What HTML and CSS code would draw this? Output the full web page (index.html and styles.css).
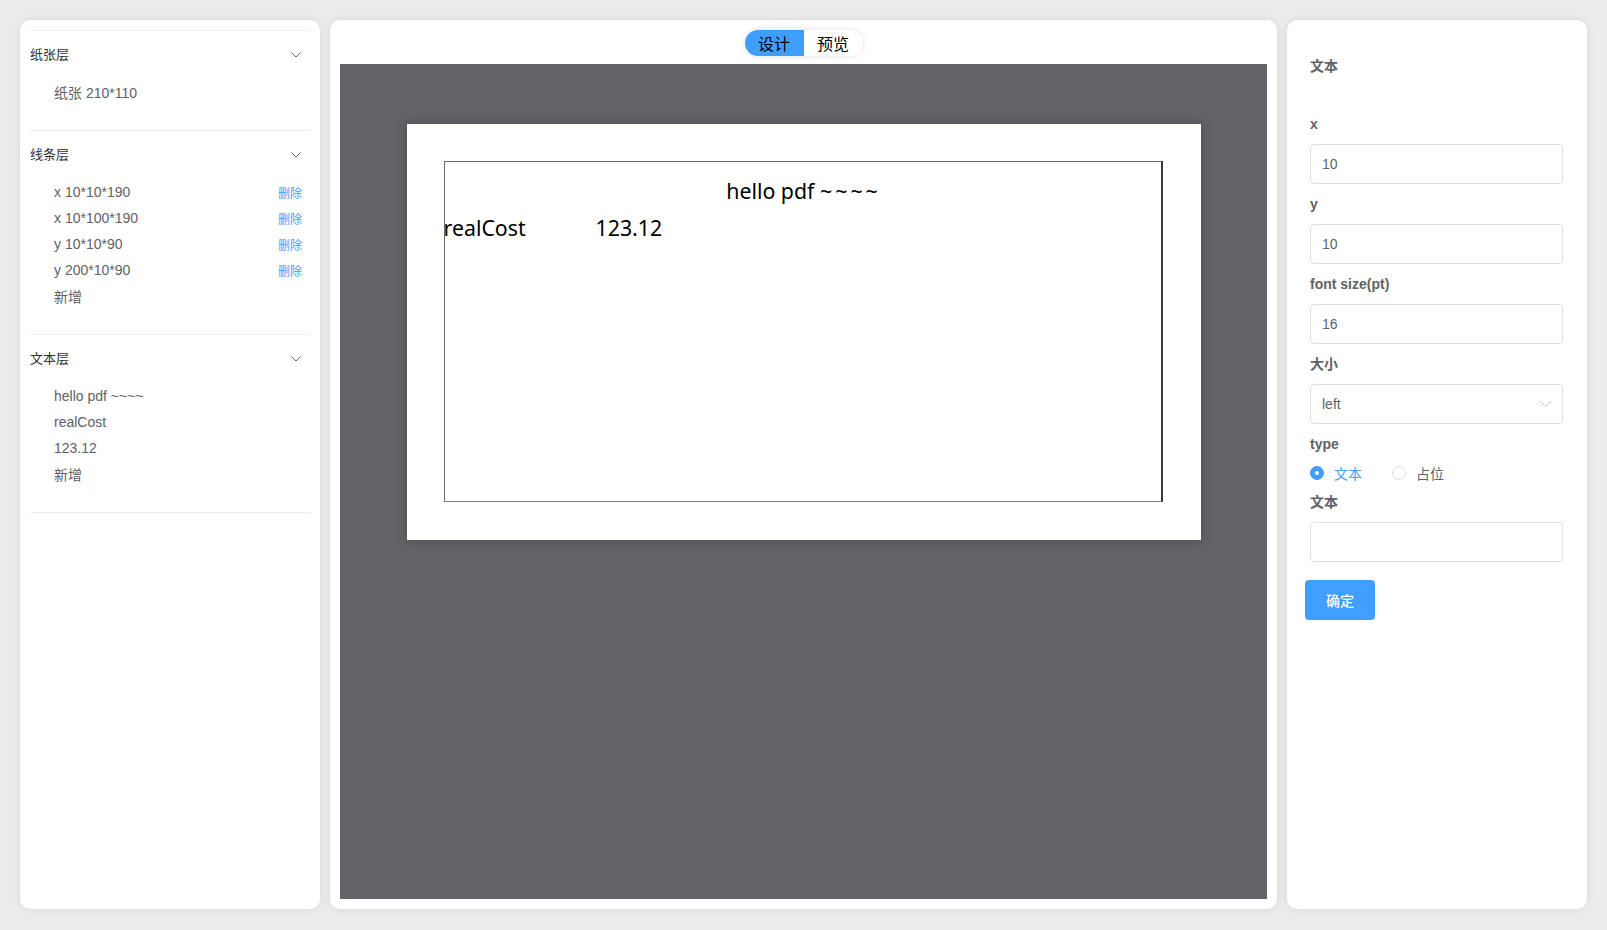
FILE: index.html
```html
<!DOCTYPE html>
<html lang="zh-CN">
<head>
<meta charset="utf-8">
<title>PDF 模板设计</title>
<link rel="stylesheet" href="styles.css">
</head>
<body>
<div class="layout">
  <aside class="panel panel-left">
    <div class="collapse">
      <section class="c-item">
        <div class="c-header"><span class="c-title">纸张层</span><svg class="c-arrow" width="10" height="6" viewBox="0 0 10 6"><path d="M0.5 0.5 L5 5 L9.5 0.5" fill="none" stroke="#606266" stroke-width="1"/></svg></div>
        <div class="c-content">
          <div class="row"><span>纸张 210*110</span></div>
        </div>
      </section>
      <section class="c-item">
        <div class="c-header"><span class="c-title">线条层</span><svg class="c-arrow" width="10" height="6" viewBox="0 0 10 6"><path d="M0.5 0.5 L5 5 L9.5 0.5" fill="none" stroke="#606266" stroke-width="1"/></svg></div>
        <div class="c-content">
          <div class="row"><span>x 10*10*190</span><a class="del">删除</a></div>
          <div class="row"><span>x 10*100*190</span><a class="del">删除</a></div>
          <div class="row"><span>y 10*10*90</span><a class="del">删除</a></div>
          <div class="row"><span>y 200*10*90</span><a class="del">删除</a></div>
          <div class="row"><span>新增</span></div>
        </div>
      </section>
      <section class="c-item">
        <div class="c-header"><span class="c-title">文本层</span><svg class="c-arrow" width="10" height="6" viewBox="0 0 10 6"><path d="M0.5 0.5 L5 5 L9.5 0.5" fill="none" stroke="#606266" stroke-width="1"/></svg></div>
        <div class="c-content">
          <div class="row"><span>hello pdf ~~~~</span></div>
          <div class="row"><span>realCost</span></div>
          <div class="row"><span>123.12</span></div>
          <div class="row"><span>新增</span></div>
        </div>
      </section>
    </div>
  </aside>

  <main class="panel panel-center">
    <div class="toggle">
      <button class="t-btn active">设计</button>
      <button class="t-btn">预览</button>
    </div>
    <div class="canvas">
      <div class="paper">
        <div class="frame"></div>
        <div class="ptext ptext-title">hello pdf <span class="tilde">~~~~</span></div>
        <div class="ptext ptext-cost">realCost</div>
        <div class="ptext ptext-num">123.12</div>
      </div>
    </div>
  </main>

  <aside class="panel panel-right">
    <div class="r-title">文本</div>
    <div class="field">
      <label class="f-label">x</label>
      <div class="f-input">10</div>
    </div>
    <div class="field">
      <label class="f-label">y</label>
      <div class="f-input">10</div>
    </div>
    <div class="field">
      <label class="f-label">font size(pt)</label>
      <div class="f-input">16</div>
    </div>
    <div class="field">
      <label class="f-label">大小</label>
      <div class="f-input f-select"><span>left</span><svg width="11" height="6" viewBox="0 0 11 6"><path d="M0.5 0.5 L5.5 5.5 L10.5 0.5" fill="none" stroke="#C0C4CC" stroke-width="1"/></svg></div>
    </div>
    <div class="field">
      <label class="f-label">type</label>
      <div class="radios">
        <span class="radio checked"><span class="r-dot"></span><span class="r-text">文本</span></span>
        <span class="radio"><span class="r-dot"></span><span class="r-text">占位</span></span>
      </div>
    </div>
    <div class="field">
      <label class="f-label">文本</label>
      <div class="f-input"></div>
    </div>
    <button class="btn-primary">确定</button>
  </aside>
</div>
</body>
</html>
```

FILE: styles.css
```css
html, body {
  margin: 0;
  padding: 0;
}
body {
  background: #ececec;
  font-family: "Liberation Sans", "Noto Sans CJK SC", sans-serif;
  color: #606266;
}
.layout {
  display: flex;
  gap: 10px;
  padding: 20px 20px 21px;
  height: 930px;
  box-sizing: border-box;
}
.panel {
  background: #fff;
  border-radius: 10px;
  box-shadow: 0 0 10px rgba(0, 0, 0, 0.09);
  box-sizing: border-box;
  height: 889px;
}
.panel-left {
  width: 300px;
  flex: none;
  padding: 10px;
}
.collapse {
  border-top: 1px solid #EBEEF5;
}
.c-item {
  border-bottom: 1px solid #EBEEF5;
}
.c-header {
  height: 48px;
  display: flex;
  align-items: center;
  justify-content: space-between;
  font-size: 13px;
  color: #303133;
}
.c-title {
  padding-bottom: 4px;
}
.c-arrow {
  margin-right: 9px;
}
.c-content {
  padding-bottom: 25px;
}
.row {
  height: 26px;
  display: flex;
  align-items: center;
  justify-content: space-between;
  padding: 0 8px 0 24px;
  font-size: 14px;
  color: #606266;
}
.del {
  font-size: 12px;
  color: #409EFF;
  cursor: pointer;
}

.panel-center {
  flex: 1;
  padding: 10px;
  display: flex;
  flex-direction: column;
  align-items: center;
}
.toggle {
  display: flex;
  height: 26px;
  border-radius: 13px;
  overflow: hidden;
  box-shadow: 0 0 6px rgba(0, 0, 0, 0.13);
  margin-bottom: 8px;
  flex: none;
}
.t-btn {
  width: 59px;
  height: 26px;
  border: 0;
  margin: 0;
  padding: 0;
  background: #fff;
  font-family: "Noto Sans CJK SC", sans-serif;
  font-size: 16px;
  color: #000;
  line-height: 26px;
}
.t-btn.active {
  background: #409EFF;
}
.canvas {
  flex: 1;
  align-self: stretch;
  background: #636468;
  display: flex;
  justify-content: center;
  align-items: flex-start;
  padding-top: 60px;
}
.paper {
  position: relative;
  width: 794px;
  height: 416px;
  background: #fff;
  box-shadow: 0 0 12px rgba(0, 0, 0, 0.25);
  flex: none;
}
.frame {
  position: absolute;
  left: 37px;
  top: 37px;
  width: 716px;
  height: 339px;
  border: 1px solid #6a6a6a;
  border-right: 2px solid #3a3a3a;
  border-bottom-color: #7a7a7a;
}
.ptext {
  position: absolute;
  font-family: "Noto Sans", sans-serif;
  font-size: 21.33px;
  line-height: 28px;
  color: #000;
  white-space: nowrap;
}
.tilde {
  letter-spacing: 3px;
}
.ptext-title {
  left: 0;
  right: 0;
  top: 53px;
  text-align: center;
}
.ptext-cost {
  left: 37px;
  top: 90px;
}
.ptext-num {
  left: 189px;
  top: 90px;
}

.panel-right {
  width: 300px;
  flex: none;
  padding: 20px 24px 0 23px;
}
.r-title {
  height: 52px;
  line-height: 52px;
  font-size: 14px;
  font-weight: bold;
  color: #606266;
  margin-bottom: 12px;
}
.f-label {
  display: block;
  height: 40px;
  line-height: 40px;
  font-size: 14px;
  font-weight: bold;
  color: #606266;
}
.f-input {
  height: 40px;
  box-sizing: border-box;
  border: 1px solid #DCDFE6;
  border-radius: 4px;
  padding: 0 11px;
  font-size: 14px;
  line-height: 38px;
  color: #606266;
}
.f-select {
  display: flex;
  align-items: center;
  justify-content: space-between;
}
.radios {
  height: 18px;
  display: flex;
  align-items: center;
}
.radio {
  display: flex;
  align-items: center;
  margin-right: 30px;
  font-size: 14px;
  color: #606266;
}
.r-dot {
  width: 14px;
  height: 14px;
  box-sizing: border-box;
  border: 1px solid #DCDFE6;
  border-radius: 50%;
  background: #fff;
  position: relative;
}
.radio.checked .r-dot {
  background: #409EFF;
  border-color: #409EFF;
}
.radio.checked .r-dot::after {
  content: "";
  position: absolute;
  left: 50%;
  top: 50%;
  width: 4px;
  height: 4px;
  margin: -2px 0 0 -2px;
  border-radius: 50%;
  background: #fff;
}
.r-text {
  padding-left: 10px;
}
.radio.checked .r-text {
  color: #409EFF;
}
.btn-primary {
  margin: 18px 0 0 -5px;
  width: 70px;
  height: 40px;
  border: 0;
  border-radius: 4px;
  background: #409EFF;
  color: #fff;
  font-family: "Liberation Sans", "Noto Sans CJK SC", sans-serif;
  font-size: 14px;
  font-weight: 500;
}
```
